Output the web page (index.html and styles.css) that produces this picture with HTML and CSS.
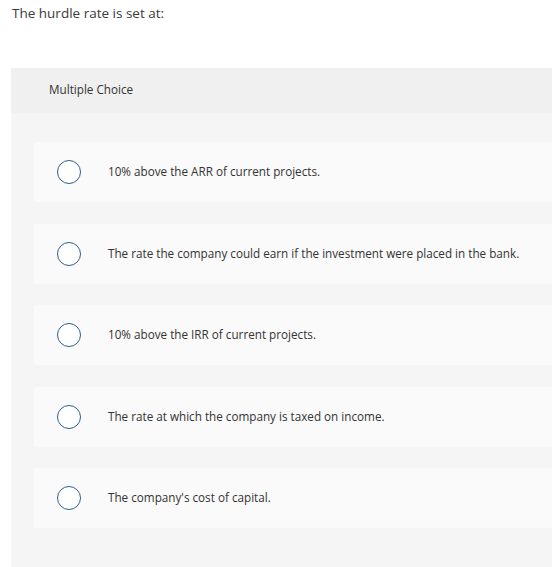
FILE: index.html
```
<!DOCTYPE html>
<html>
<head>
<meta charset="utf-8">
<link rel="stylesheet" href="styles.css">
</head>
<body>
<p class="question">The hurdle rate is set at:</p>
<div class="panel">
  <div class="panel-head">Multiple Choice</div>
  <div class="options">
    <div class="option"><span class="radio"></span><span class="label">10% above the ARR of current projects.</span></div>
    <div class="option"><span class="radio"></span><span class="label">The rate the company could earn if the investment were placed in the bank.</span></div>
    <div class="option"><span class="radio"></span><span class="label">10% above the IRR of current projects.</span></div>
    <div class="option"><span class="radio"></span><span class="label">The rate at which the company is taxed on income.</span></div>
    <div class="option"><span class="radio"></span><span class="label">The company's cost of capital.</span></div>
  </div>
</div>
</body>
</html>
```
FILE: styles.css
```
html, body {
  margin: 0;
  padding: 0;
  background: #ffffff;
}
body {
  font-family: "Open Sans", "Lato", sans-serif;
  color: #333333;
  overflow: hidden;
}
.question {
  margin: 0;
  padding: 4px 0 0 12px;
  font-size: 13.5px;
  line-height: 18px;
  color: #3a3a3a;
}
.panel {
  margin: 46px 0 0 11px;
  background: #f5f5f5;
  height: 500px;
}
.panel-head {
  background: #f0f0f0;
  height: 45px;
  box-sizing: border-box;
  padding-left: 38px;
  font-size: 11.7px;
  line-height: 43px;
  color: #333;
}
.options {
  display: flex;
  flex-direction: column;
  gap: 21.5px;
  padding: 29px 0 0 23px;
}
.option {
  display: flex;
  align-items: center;
  height: 60px;
  background: #fafafa;
  border-radius: 3px 0 0 3px;
  padding-left: 23px;
}
.radio {
  width: 22px;
  height: 22px;
  border: 1.5px solid #2e5d8e;
  border-radius: 50%;
  background: #fff;
  flex: none;
}
.label {
  margin-left: 27px;
  font-size: 11.7px;
  line-height: 14px;
  margin-top: -2px;
  color: #333;
}
```
